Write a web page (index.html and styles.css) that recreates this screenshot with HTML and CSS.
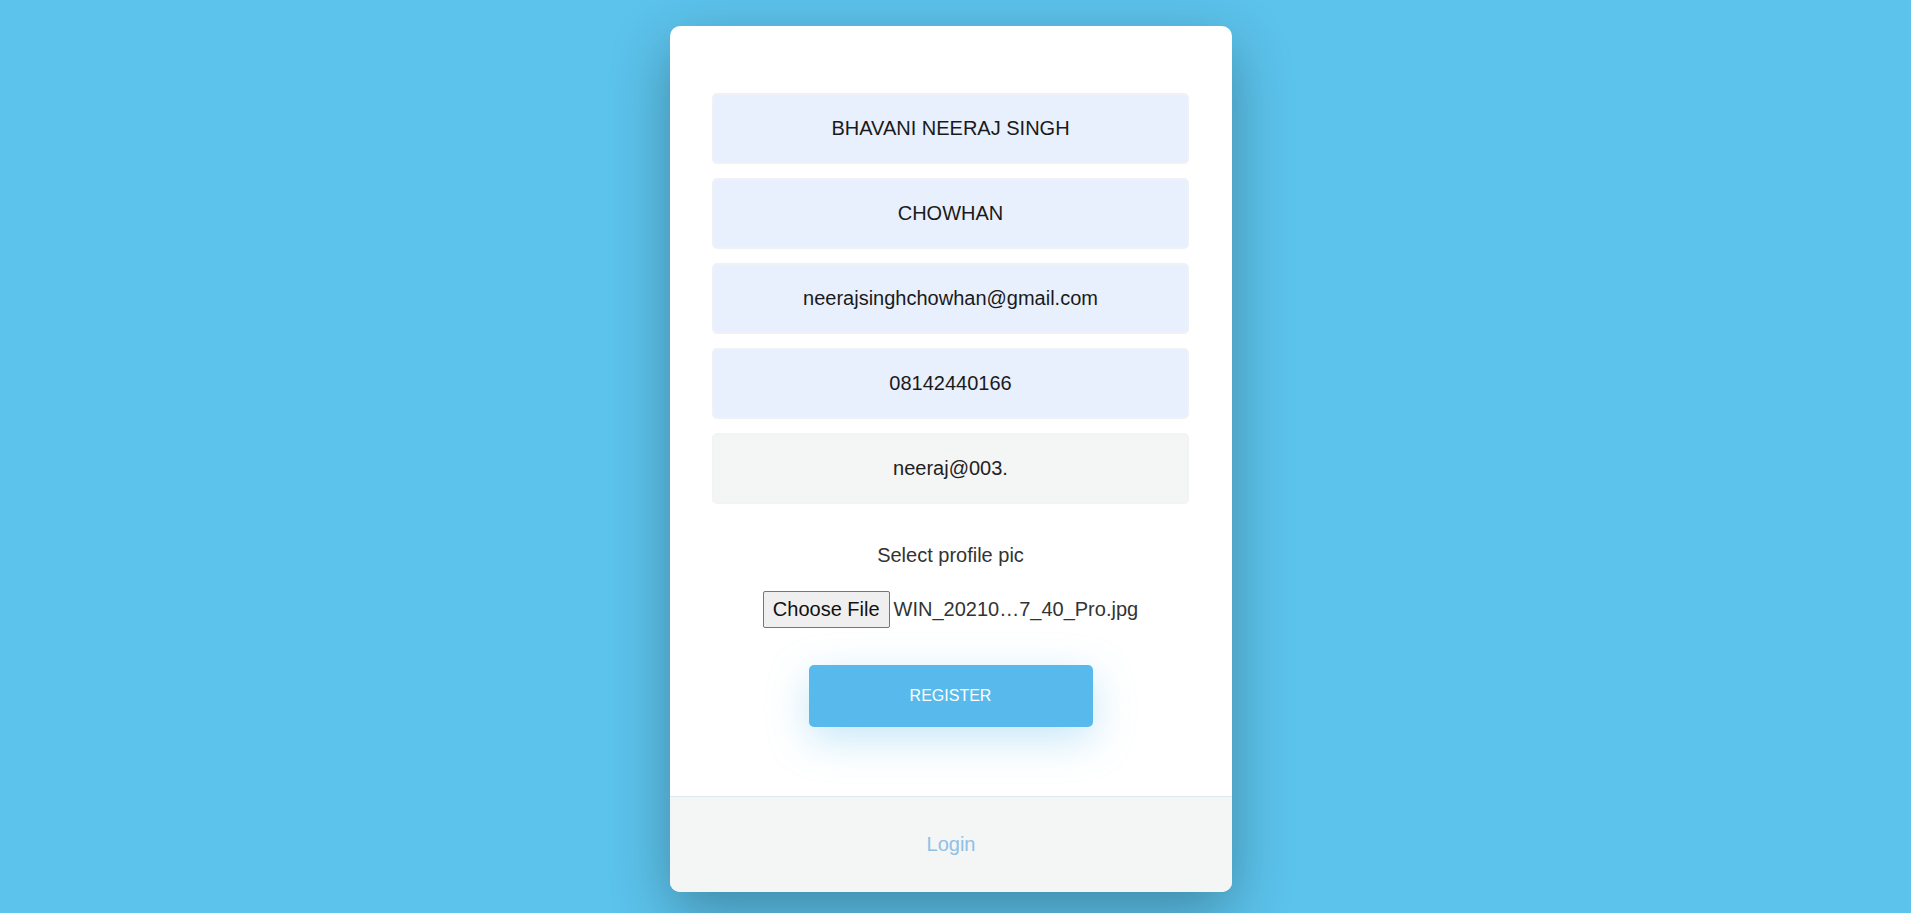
FILE: index.html
```html
<!DOCTYPE html>
<html lang="en">
<head>
<meta charset="utf-8">
<title>Register</title>
<link rel="stylesheet" href="styles.css">
</head>
<body>
<div class="page">
  <div class="card">
    <form class="form">
      <div class="field">BHAVANI NEERAJ SINGH</div>
      <div class="field">CHOWHAN</div>
      <div class="field">neerajsinghchowhan@gmail.com</div>
      <div class="field">08142440166</div>
      <div class="field field-plain">neeraj@003.</div>
      <div class="label">Select profile pic</div>
      <div class="file-row">
        <span class="file-btn">Choose File</span>
        <span class="file-name">WIN_20210…7_40_Pro.jpg</span>
      </div>
      <div class="submit">REGISTER</div>
    </form>
    <div class="footer"><span class="login">Login</span></div>
  </div>
</div>
</body>
</html>
```

FILE: styles.css
```css
html, body {
  margin: 0;
  padding: 0;
}
body {
  background: #5cc3ec;
  font-family: "Liberation Sans", Arial, sans-serif;
  min-height: 913px;
}
.page {
  display: flex;
  justify-content: center;
  padding-top: 26px;
  padding-right: 9px;
}
.card {
  width: 562px;
  background: #ffffff;
  border-radius: 10px;
  overflow: hidden;
  box-shadow: 0 20px 60px rgba(0, 0, 0, 0.3);
}
.form {
  display: flex;
  flex-direction: column;
  align-items: center;
  padding: 67px 43px 69px 42px;
  margin: 0;
}
.field {
  box-sizing: border-box;
  width: 100%;
  height: 71px;
  display: flex;
  align-items: center;
  justify-content: center;
  background: #e8f0fe;
  border: 2px solid #eef2f7;
  border-radius: 5px;
  font-size: 20px;
  color: #1a1a1a;
  margin-bottom: 14px;
}
.field-plain {
  background: #f4f5f5;
  border-color: #f2f3f3;
  color: #222;
  margin-bottom: 0;
}
.label {
  margin-top: 40px;
  font-size: 20px;
  line-height: 23px;
  color: #333;
}
.file-row {
  margin-top: 24px;
  display: flex;
  align-items: center;
  font-size: 20px;
  line-height: 23px;
}
.file-btn {
  box-sizing: border-box;
  height: 37px;
  padding: 6px 9px;
  background: #efefef;
  border: 1px solid #767676;
  border-radius: 2px;
  color: #111;
}
.file-name {
  margin-left: 4px;
  color: #333;
}
.submit {
  margin-top: 37px;
  width: 284px;
  height: 62px;
  display: flex;
  align-items: center;
  justify-content: center;
  background: #58baec;
  border-radius: 5px;
  color: #ffffff;
  font-size: 16px;
  box-shadow: 0 12px 40px rgba(88, 186, 236, 0.35);
}
.footer {
  height: 95px;
  border-top: 1px solid #dce9f3;
  background: #f4f5f5;
  display: flex;
  align-items: center;
  justify-content: center;
}
.login {
  font-size: 20px;
  color: #8fc0e6;
}
```
